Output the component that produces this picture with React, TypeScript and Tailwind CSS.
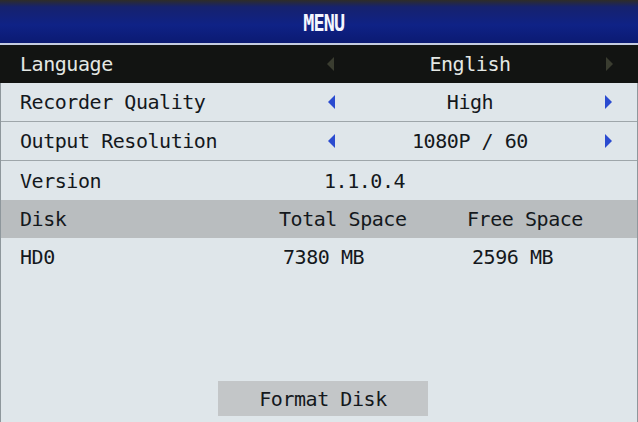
const mono = "font-['DejaVu_Sans_Mono','Liberation_Mono',monospace]";

function Arrow({ dir, dim }: { dir: "l" | "r"; dim?: boolean }) {
  return (
    <svg width="8" height="14" viewBox="0 0 8 14" className="shrink-0">
      <polygon
        points={dir === "l" ? "8,0 8,14 1,7" : "0,0 0,14 7,7"}
        fill={dim ? "#3a3d30" : "#2a4bd0"}
      />
    </svg>
  );
}

function OptionRow({ label, value, dark }: { label: string; value: string; dark?: boolean }) {
  return (
    <div
      className={`flex items-center pr-[24px] ${
        dark
          ? "bg-[#121412] text-[#e4e8e4] h-[38px] pl-[20px]"
          : "h-[39px] pl-[19px] border-b border-[#9ea6aa] text-[#14181c]"
      }`}
    >
      <div className={dark ? "w-[306px]" : "w-[307px]"}>{label}</div>
      <Arrow dir="l" dim={dark} />
      <div className="flex-1 text-center">{value}</div>
      <Arrow dir="r" dim={dark} />
    </div>
  );
}

export default function App() {
  return (
    <div className={`w-[638px] h-[422px] overflow-hidden flex flex-col ${mono} text-[20px] tracking-[-0.45px]`}>
      <header className="h-[45px] shrink-0 flex items-center justify-center bg-[linear-gradient(180deg,#2e2c28_0px,#16226e_7px,#0f2286_25px,#0b1a72_100%)] border-b-2 border-[#c4cce0]">
        <span className="text-[#f4f6ff] font-bold text-[23px] leading-none ml-[10px] mt-[4px] scale-x-[0.8] tracking-[-1px]">MENU</span>
      </header>
      <OptionRow label="Language" value="English" dark />
      <div className="flex-1 flex flex-col bg-[#dfe6ea] border-x border-[#8e979c]">
        <OptionRow label="Recorder Quality" value="High" />
        <OptionRow label="Output Resolution" value="1080P / 60" />
        <div className="flex items-center h-[39px] pl-[19px] text-[#14181c]">
          <div className="w-[304px]">Version</div>
          <div>1.1.0.4</div>
        </div>
        <div className="flex items-center h-[38px] pl-[19px] bg-[#b9bdbf] text-[#14181c]">
          <div className="w-[259px]">Disk</div>
          <div className="w-[188px]">Total Space</div>
          <div>Free Space</div>
        </div>
        <div className="flex items-center h-[38px] pl-[19px] text-[#14181c]">
          <div className="w-[263px]">HD0</div>
          <div className="w-[189px]">7380 MB</div>
          <div>2596 MB</div>
        </div>
        <div className="flex-1" />
        <div className="flex justify-center pb-[6px] pl-[8px]">
          <div className="w-[210px] h-[35px] flex items-center justify-center bg-[#c3c6c8] text-[#14181c]">
            Format Disk
          </div>
        </div>
      </div>
    </div>
  );
}
